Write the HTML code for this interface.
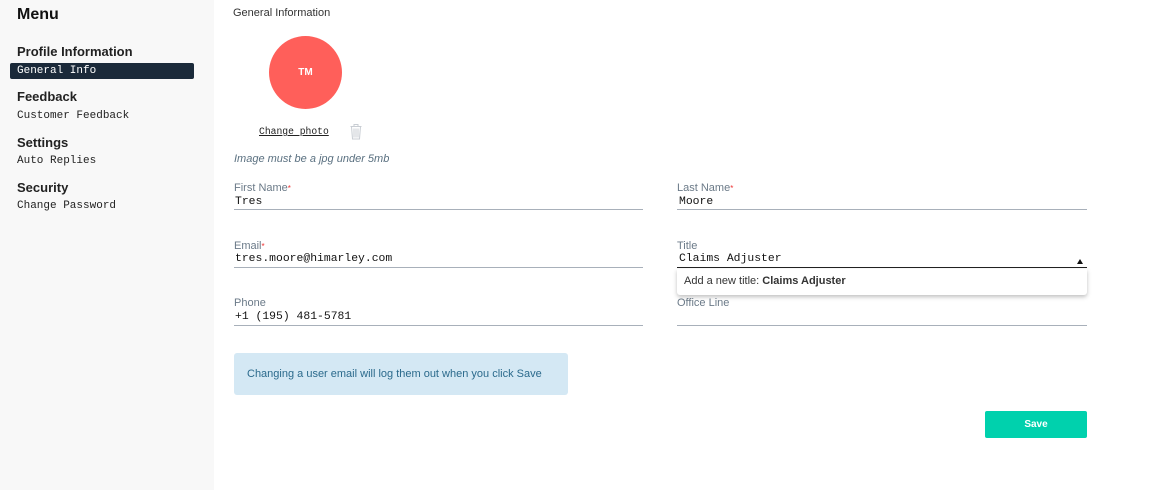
<!DOCTYPE html>
<html><head><meta charset="utf-8"><style>
*{margin:0;padding:0;box-sizing:border-box}
body{width:1169px;height:490px;background:#fff;position:relative;overflow:hidden;font-family:"Liberation Sans",sans-serif;color:#1b2430}
.a{position:absolute;white-space:nowrap}
.mono{font-family:"Liberation Mono",monospace}
#side{position:absolute;left:0;top:0;width:214px;height:490px;background:#f8f8f8}
.h{font-size:13px;font-weight:bold;color:#222;left:17px}
.it{font-size:11px;left:17px;color:#222}
.lab{font-size:11px;color:#6b7a88}
.lab b{color:#e33;font-weight:normal;font-size:8px}
.val{font-size:11.4px;color:#111}
.line{position:absolute;height:1px;background:#a8b0ba}
</style></head><body>
<div id="side">
<div class="a" style="left:17px;top:6px;font-size:16px;font-weight:bold;color:#111">Menu</div>
<div class="a h" style="top:44px">Profile Information</div>
<div class="a" style="left:10px;top:63px;width:184px;height:16px;background:#1b2a3a;border-radius:2px"></div>
<div class="a it mono" style="top:63px;color:#fff;line-height:16px">General Info</div>
<div class="a h" style="top:89px">Feedback</div>
<div class="a it mono" style="top:110px">Customer Feedback</div>
<div class="a h" style="top:135px">Settings</div>
<div class="a it mono" style="top:155px">Auto Replies</div>
<div class="a h" style="top:180px">Security</div>
<div class="a it mono" style="top:200px">Change Password</div>
</div>
<div class="a" style="left:233px;top:7px;font-size:11px;color:#333">General Information</div>
<div class="a" style="left:269px;top:36px;width:73px;height:73px;border-radius:50%;background:#ff5f5a;color:#fff;font-size:10px;font-weight:bold;text-align:center;line-height:73px">TM</div>
<div class="a mono" style="left:259px;top:126px;font-size:9.7px;text-decoration:underline;color:#222">Change photo</div>
<svg class="a" style="left:349px;top:123px" width="14" height="17" viewBox="0 0 14 17" fill="none" stroke="#c8cdd3" stroke-width="1"><path d="M1.5 3.5h11M5 3.5V1.5h4v2M2.5 3.5l1 12.5h7l1-12.5M7 5.5v9M5 5.5v9M9 5.5v9"/></svg>
<div class="a" style="left:234px;top:153px;font-size:11px;font-style:italic;color:#5a7080">Image must be a jpg under 5mb</div>

<div class="a lab" style="left:234px;top:182px">First Name<b>*</b></div>
<div class="a val mono" style="left:235px;top:196px">Tres</div>
<div class="line" style="left:234px;top:209px;width:409px"></div>
<div class="a lab" style="left:677px;top:182px">Last Name<b>*</b></div>
<div class="a val mono" style="left:679px;top:196px">Moore</div>
<div class="line" style="left:677px;top:209px;width:410px"></div>

<div class="a lab" style="left:234px;top:240px">Email<b>*</b></div>
<div class="a val mono" style="left:235px;top:253px">tres.moore@himarley.com</div>
<div class="line" style="left:234px;top:267px;width:409px"></div>
<div class="a lab" style="left:677px;top:240px">Title</div>
<div class="a val mono" style="left:679px;top:253px">Claims Adjuster</div>
<div class="a" style="left:1077px;top:259px;width:0;height:0;border-left:3.5px solid transparent;border-right:3.5px solid transparent;border-bottom:5px solid #111"></div>
<div class="line" style="left:677px;top:267px;width:410px;background:#222"></div>

<div class="a lab" style="left:234px;top:297px">Phone</div>
<div class="a val mono" style="left:235px;top:311px">+1 (195) 481-5781</div>
<div class="line" style="left:234px;top:325px;width:409px"></div>
<div class="a lab" style="left:677px;top:297px">Office Line</div>
<div class="line" style="left:677px;top:325px;width:410px"></div>
<div class="a" style="left:677px;top:269px;width:410px;height:26px;background:#fff;box-shadow:0 2px 4px rgba(0,0,0,.25);border-radius:0 0 3px 3px;font-size:11px;color:#333;padding-left:7px;line-height:25px">Add a new title: <b>Claims Adjuster</b></div>

<div class="a" style="left:234px;top:353px;width:334px;height:42px;background:#d4e8f4;border-radius:3px;font-size:11px;color:#2b6a8c;line-height:42px;padding-left:13px">Changing a user email will log them out when you click Save</div>
<div class="a" style="left:985px;top:411px;width:102px;height:27px;background:#00d1ad;border-radius:2px;color:#fff;font-size:10px;font-weight:bold;text-align:center;line-height:27px">Save</div>
</body></html>
